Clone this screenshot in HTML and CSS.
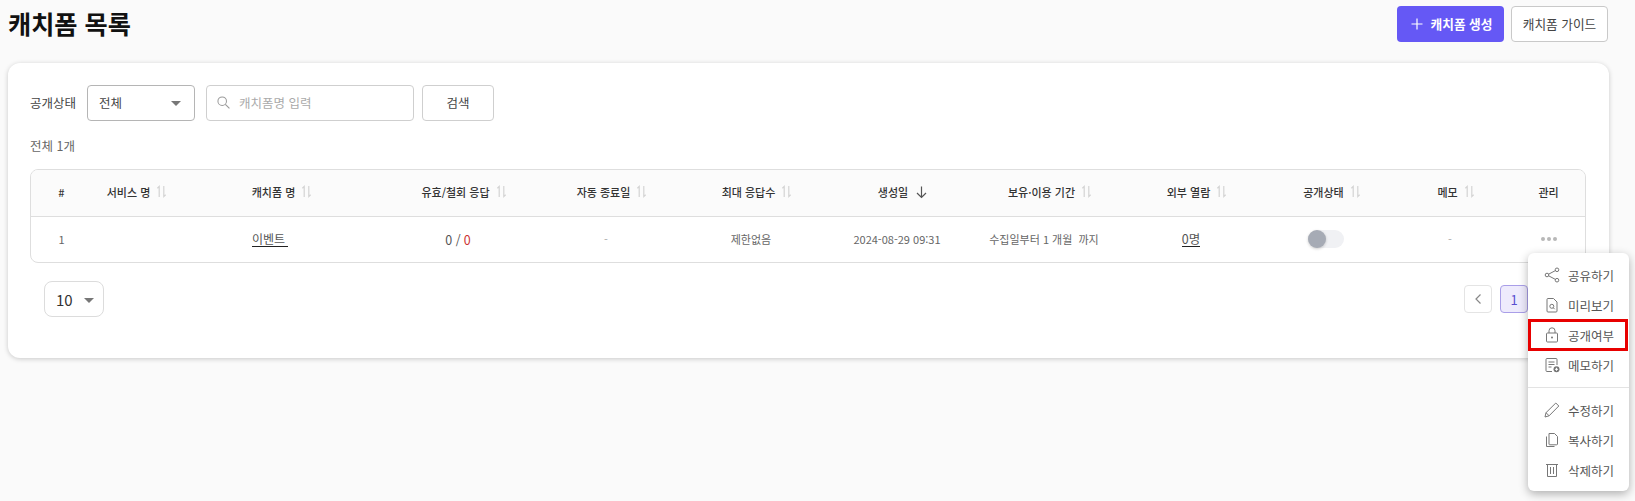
FILE: index.html
```html
<!DOCTYPE html>
<html lang="ko">
<head>
<meta charset="utf-8">
<title>캐치폼 목록</title>
<link rel="stylesheet" href="styles.css">
</head>
<body>
<svg class="defs" width="0" height="0" aria-hidden="true">
  <symbol id="sort" viewBox="0 0 12 14"><path d="M3.500 13V1.500L1.500 3.500M8.500 1v11.500l2-2" fill="none" stroke="currentColor" stroke-width="1.300"/></symbol>
</svg>
<header class="top">
  <h1 class="title">캐치폼 목록</h1>
  <div class="top-actions">
    <button class="btn btn-primary"><svg class="plus" viewBox="0 0 12 12"><path d="M6 .5v11M.5 6h11" stroke="currentColor" stroke-width="1.200" fill="none"/></svg>캐치폼 생성</button>
    <button class="btn btn-outline">캐치폼 가이드</button>
  </div>
</header>
<main class="card">
  <div class="filters">
    <span class="filter-label">공개상태</span>
    <div class="select"><span>전체</span><i class="caret"></i></div>
    <div class="search">
      <svg class="search-icon" viewBox="0 0 14 14"><circle cx="5.600" cy="5.600" r="4.600" fill="none" stroke="currentColor" stroke-width="1.100"/><path d="M9 9l4.400 4.400" stroke="currentColor" stroke-width="1.200"/></svg>
      <span>캐치폼명 입력</span>
    </div>
    <button class="btn-search">검색</button>
  </div>
  <p class="count">전체 1개</p>
  <div class="table">
    <div class="row head">
      <div class="c">#</div>
      <div class="c s">서비스 명<svg class="sort"><use href="#sort"/></svg></div>
      <div class="c s">캐치폼 명<svg class="sort"><use href="#sort"/></svg></div>
      <div class="c s">유효/철회 응답<svg class="sort"><use href="#sort"/></svg></div>
      <div class="c s">자동 종료일<svg class="sort"><use href="#sort"/></svg></div>
      <div class="c s">최대 응답수<svg class="sort"><use href="#sort"/></svg></div>
      <div class="c s">생성일<svg class="sort-down" viewBox="0 0 12 14"><path d="M6 1.500v11M1.500 8l4.500 4.500L10.500 8" fill="none" stroke="currentColor" stroke-width="1.200"/></svg></div>
      <div class="c s">보유·이용 기간<svg class="sort"><use href="#sort"/></svg></div>
      <div class="c s">외부 열람<svg class="sort"><use href="#sort"/></svg></div>
      <div class="c s">공개상태<svg class="sort"><use href="#sort"/></svg></div>
      <div class="c s">메모<svg class="sort"><use href="#sort"/></svg></div>
      <div class="c">관리</div>
    </div>
    <div class="row body">
      <div class="c">1</div>
      <div class="c"></div>
      <div class="c left"><a class="link name">이벤트&nbsp;</a></div>
      <div class="c big">0 / <span class="red">0</span></div>
      <div class="c muted">-</div>
      <div class="c">제한없음</div>
      <div class="c">2024-08-29 09:31</div>
      <div class="c">수집일부터 1 개월&nbsp; 까지</div>
      <div class="c"><a class="link big">0명</a></div>
      <div class="c"><span class="toggle"><i class="knob"></i></span></div>
      <div class="c muted">-</div>
      <div class="c"><span class="dots"><i></i><i></i><i></i></span></div>
    </div>
  </div>
  <div class="foot">
    <div class="page-size"><span>10</span><i class="caret"></i></div>
    <div class="pager">
      <button class="pg"><svg class="chev" viewBox="0 0 8 12"><path d="M6.500 1.500L2 6l4.500 4.500" fill="none" stroke="currentColor" stroke-width="1.200"/></svg></button>
      <button class="pg pg-on">1</button>
      <button class="pg"><svg class="chev" viewBox="0 0 8 12"><path d="M1.500 1.500L6 6l-4.500 4.500" fill="none" stroke="currentColor" stroke-width="1.200"/></svg></button>
    </div>
  </div>
</main>
<nav class="menu">
  <div class="group">
    <a class="item"><svg class="ico" viewBox="0 0 16 16"><circle cx="3" cy="8" r="1.800"/><circle cx="13" cy="2.800" r="1.800"/><circle cx="13" cy="13.200" r="1.800"/><path d="M4.600 7.200l6.800-3.600M4.600 8.800l6.800 3.600"/></svg>공유하기</a>
    <a class="item"><svg class="ico" viewBox="0 0 16 16"><path d="M3 2.500a1 1 0 0 1 1-1h5.500l3.500 3.500v9a1 1 0 0 1-1 1H4a1 1 0 0 1-1-1z"/><circle cx="7.800" cy="9.300" r="2"/><path d="M9.300 10.800l1.400 1.400"/></svg>미리보기</a>
    <a class="item item-marked"><svg class="ico" viewBox="0 0 16 16"><rect x="2.500" y="6" width="11" height="9" rx="1"/><path d="M5 6V3.800a3 3 0 0 1 6 0V6"/><circle class="dot" cx="8" cy="10.500" r="1"/></svg>공개여부</a>
    <a class="item"><svg class="ico" viewBox="0 0 16 16"><path d="M8 14.500H3a1 1 0 0 1-1-1v-11a1 1 0 0 1 1-1h9a1 1 0 0 1 1 1V8"/><path d="M4.500 5h6M4.500 7.500h6M4.500 10h3"/><circle class="dot" cx="12.500" cy="12.300" r="3"/><path class="inv" d="M12.500 10.800v3M11 12.300h3"/></svg>메모하기</a>
  </div>
  <div class="group">
    <a class="item"><svg class="ico" viewBox="0 0 16 16"><path d="M1 15l1-4.300L11.800 1l3 3-9.700 9.800z"/><path d="M2 10.700l3.100 3.100"/></svg>수정하기</a>
    <a class="item"><svg class="ico" viewBox="0 0 16 16"><path d="M5 1.500h5.500l3 3V12a.8.8 0 0 1-.8.800H5.800A.8.800 0 0 1 5 12z"/><path d="M2.500 4.500v10h8"/></svg>복사하기</a>
    <a class="item"><svg class="ico" viewBox="0 0 16 16"><path d="M3.500 2.500h9v12h-9zM6.500 5v7M9.500 5v7M2 2.500h12"/></svg>삭제하기</a>
  </div>
</nav>
</body>
</html>
```

FILE: styles.css
```css
* { box-sizing: border-box; }
html, body { margin: 0; height: 100%; }
body {
  width: 1635px;
  height: 501px;
  overflow: hidden;
  position: relative;
  background: #fafafa;
  color: #444;
  font-family: "Noto Sans CJK KR", "Noto Sans", sans-serif;
  font-size: 12.500px;
}
.defs { position: absolute; }
.top {
  display: flex;
  justify-content: space-between;
  align-items: flex-start;
  height: 63px;
  padding: 6px 27px 0 8px;
}
.title { margin: -1px 0 0; font-size: 25.200px; line-height: 36px; font-weight: 700; color: #111; }
.top-actions { display: flex; gap: 7px; }
.btn {
  height: 36px;
  border-radius: 4px;
  font: inherit;
  font-size: 12.700px;
  display: flex;
  align-items: center;
  justify-content: center;
  padding: 0 0 2px;
}
.btn-primary {
  width: 107px;
  background: #6558f5;
  border: 0;
  color: #fff;
  font-weight: 700;
  gap: 8px;
  padding-left: 2px;
}
.plus { width: 12px; height: 12px; margin-top: 2px; }
.btn-outline { width: 97px; background: #fff; border: 1px solid #c9c9c9; color: #444; }
.card {
  margin: 0 26px 0 8px;
  height: 295px;
  background: #fff;
  border-radius: 12px;
  box-shadow: 0 1px 5px rgba(0, 0, 0, .2);
  padding: 22px 23px 0 22px;
}
.filters { display: flex; align-items: center; height: 36px; }
.filter-label { margin-right: 11px; color: #444; padding-bottom: 2px; }
.select {
  width: 108px;
  height: 36px;
  border: 1px solid #b5b5b5;
  border-radius: 4px;
  display: flex;
  align-items: center;
  justify-content: space-between;
  padding: 0 13px 2px 11px;
  color: #444;
  margin-right: 11px;
}
.caret {
  width: 0;
  height: 0;
  border-left: 5px solid transparent;
  border-right: 5px solid transparent;
  border-top: 5px solid #777;
  margin-top: 2px;
}
.search {
  width: 208px;
  height: 36px;
  border: 1px solid #cfcfcf;
  border-radius: 4px;
  display: flex;
  align-items: center;
  gap: 9px;
  padding: 0 10px 2px;
  color: #aaa;
  margin-right: 8px;
}
.search-icon { width: 13px; height: 13px; color: #999; }
.btn-search {
  width: 72px;
  height: 36px;
  background: #fff;
  border: 1px solid #cfcfcf;
  border-radius: 4px;
  font: inherit;
  color: #444;
  padding: 0 0 2px;
}
.count { margin: 16px 0 0; line-height: 18px; color: #666; height: 32px; }
.table {
  border: 1px solid #dedede;
  border-radius: 8px;
  overflow: hidden;
  height: 94px;
}
.row {
  display: grid;
  grid-template-columns: 61px 78px 212px 152px 144px 146px 146px 148px 146px 124px 124px 73px;
  align-items: center;
}
.head {
  height: 47px;
  background: #fbfbfb;
  border-bottom: 1px solid #dedede;
  font-weight: 500;
  color: #333;
  font-size: 11px;
  padding-bottom: 3px;
}
.body { height: 45px; color: #666; font-size: 11px; padding-bottom: 1px; }
.c { display: flex; justify-content: center; align-items: center; white-space: nowrap; }
.s { padding-left: 12px; }
.left { justify-content: flex-start; padding-left: 82px; }
.sort { width: 11px; height: 13px; margin-left: 6px; color: #d4d4d4; }
.sort-down { width: 13px; height: 14px; margin-left: 7px; color: #555; }
.link { color: #555; border-bottom: 1px solid #222; line-height: 15px; }
.name { font-size: 12px; }
.big { font-size: 12.500px; color: #555; }
.red { color: #c33; margin-left: 3px; }
.muted { color: #aaa; }
.toggle {
  width: 36px;
  height: 18px;
  border-radius: 9px;
  background: #f0f1f4;
  display: flex;
  align-items: center;
}
.knob {
  width: 18px;
  height: 18px;
  border-radius: 50%;
  background: #a6abb5;
  box-shadow: 0 1px 3px rgba(0, 0, 0, .2);
}
.dots { display: flex; gap: 2px; }
.dots i { width: 4px; height: 4px; border-radius: 50%; background: #b8b8b8; }
.foot {
  display: flex;
  justify-content: space-between;
  align-items: flex-start;
  padding: 18px 14px 0;
}
.page-size {
  width: 60px;
  height: 36px;
  border: 1px solid #dcdcdc;
  border-radius: 8px;
  display: flex;
  align-items: center;
  justify-content: space-between;
  padding: 0 9px 0 11px;
  font-size: 15px;
  color: #333;
}
.pager { display: flex; gap: 8px; margin-right: 8px; margin-top: 4px; }
.pg {
  width: 28px;
  height: 28px;
  border: 1px solid #e4e4e4;
  border-radius: 4px;
  background: #fff;
  color: #888;
  font: inherit;
  display: flex;
  align-items: center;
  justify-content: center;
}
.pg-on { background: #eeebfc; border-color: #a99ee8; color: #5a4fd0; font-size: 13px; }
.chev { width: 8px; height: 12px; }
.menu {
  position: absolute;
  left: 1528px;
  top: 253px;
  width: 101px;
  height: 238px;
  background: #fff;
  border-radius: 6px;
  box-shadow: 0 3px 10px rgba(0, 0, 0, .3);
  padding-top: 7px;
}
.group + .group { border-top: 1px solid #e3e3e3; margin-top: 7px; padding-top: 7px; }
.item {
  display: flex;
  align-items: center;
  gap: 8px;
  height: 30px;
  padding-left: 16px;
  font-size: 12.500px;
  color: #555;
  white-space: nowrap;
}
.item-marked { outline: 3px solid #e80000; outline-offset: -2px; margin: 0 2px 0 1px; padding-left: 15px; }
.ico { width: 16px; height: 16px; fill: none; stroke: #777; stroke-width: 1; flex: none; }
.ico .dot { fill: #777; stroke: none; }
.ico .inv { stroke: #fff; }
```
